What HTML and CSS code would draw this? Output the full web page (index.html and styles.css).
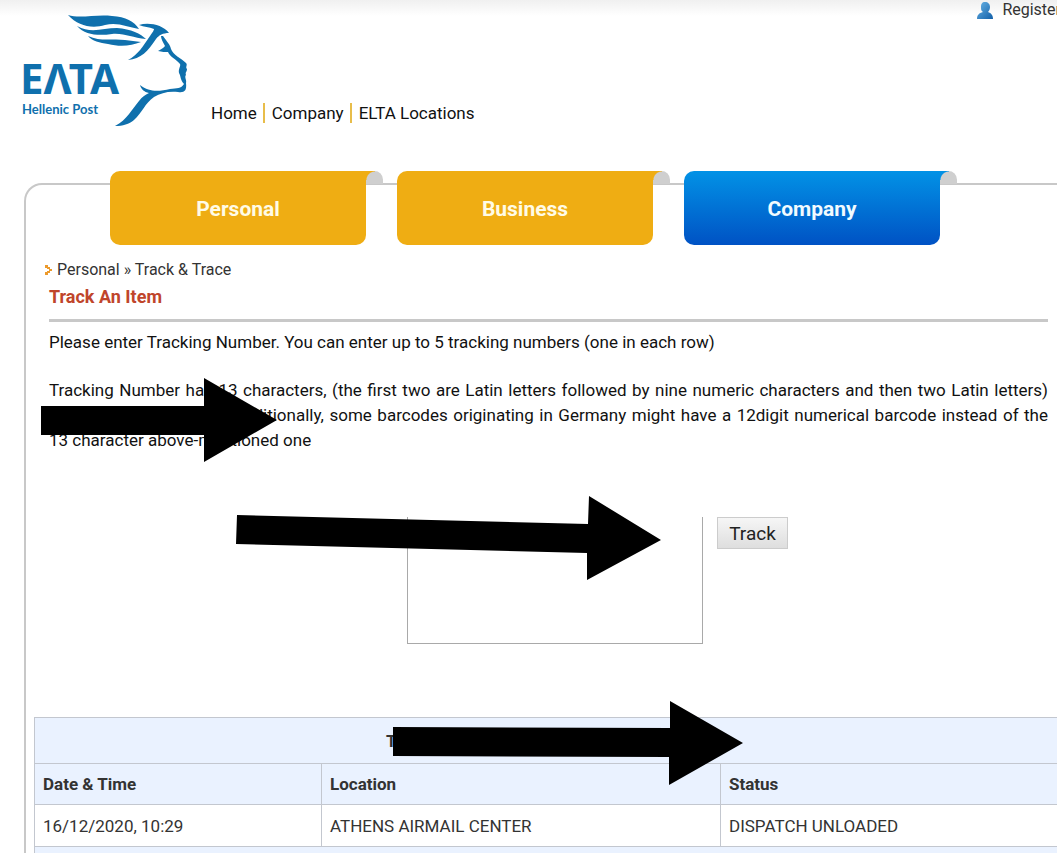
FILE: index.html
```html
<!DOCTYPE html>
<html lang="en">
<head>
    <meta charset="UTF-8">
    <meta name="viewport" content="width=device-width, initial-scale=1.0">
    <title>ELTA - Track &amp; Trace</title>
    <link rel="stylesheet" href="styles.css">
</head>
<body>
    <header>
        <a href="#" class="logo" aria-label="ELTA Hellenic Post">
            <svg width="190" height="132" viewBox="0 0 190 132">
                <g fill="#0f70ad">
                    <path d="M68 15 C80 19 96 14 112 16 C126 17 134 21 139 29 C127 27 118 22 105 25 C92 29 78 26 68 15 Z"/>
                    <path d="M77 26 C91 34 103 28 117 28 C131 29 141 34 146 39 C132 38 125 33 112 34 C98 36 85 35 77 26 Z"/>
                    <path d="M88 36 C101 42 113 38 125 40 L141 42 C131 46 120 47 108 44 C100 43 92 41 88 36 Z"/>
                    <path d="M139 25 C149 22 163 25 169 33 C163 33 159 35 156 39 C148 51 141 59 128 60 C138 55 143 46 150 36 C153 32 154 30 154 29 C149 27 144 27 139 25 Z"/>
                    <path d="M163 36 C167 42 170 44 171 49 C173 55 181 58 186 63 C188 65 185 67 187 69 C187 72 185 72 186 75 C184 77 187 80 186 83 C187 91 184 93 178 92 C168 91 161 93 154 97 C145 103 142 113 134 120 C129 124 123 126 115 126 C127 120 132 109 139 101 C142 97 145 95 149 93 C144 92 141 89 140 85 C150 93 160 91 170 89 C177 88 181 89 184 84 C180 80 181 76 179 73 C178 69 181 66 180 64 C176 59 170 57 168 52 C165 52 162 52 158 51 C161 49 164 48 165 46 C163 42 161 39 161 36 Z"/>
                </g>
                <text x="20" y="94" class="logo-name">ΕΛΤΑ</text>
                <text x="22" y="114" class="logo-sub">Hellenic Post</text>
            </svg>
        </a>
        <nav class="main-nav">
            <a href="#">Home</a>
            <a href="#">Company</a>
            <a href="#">ELTA Locations</a>
        </nav>
        <a href="#" class="register">
            <svg width="17" height="17" viewBox="0 0 17 17">
                <defs>
                    <linearGradient id="userBlue" x1="0" y1="0" x2="1" y2="1">
                        <stop offset="0" stop-color="#69b4e6"/>
                        <stop offset="1" stop-color="#125fa8"/>
                    </linearGradient>
                </defs>
                <path fill="url(#userBlue)" d="M8 0 C11 0 13 2 13 5 C13 7 12 9 11 10 C14 11 16 13 16 17 L0 17 C0 13 2 11 6 10 C4 9 4 7 4 5 C4 2 5 0 8 0 Z"/>
            </svg>
            Register
        </a>
    </header>

    <main class="panel">
        <div class="tabs">
            <a href="#" class="tab">Personal</a>
            <a href="#" class="tab">Business</a>
            <a href="#" class="tab active">Company</a>
        </div>

        <div class="content">
            <div class="breadcrumb">
                <svg width="8" height="10" viewBox="0 0 8 10" fill="#ec9a2c">
                    <path d="M0 0h3v2h2v2h2v2h-2v2h-2v2h-3v-3h2v-1h2v-2h-2v-1h-2z"/>
                </svg>
                <span><a href="#">Personal</a> » <a href="#">Track &amp; Trace</a></span>
            </div>
            <h1>Track An Item</h1>
            <p>Please enter Tracking Number. You can enter up to 5 tracking numbers (one in each row)</p>
            <p>Tracking Number has 13 characters, (the first two are Latin letters followed by nine numeric characters and then two Latin letters) (e.g. RR123456789GR). Additionally, some barcodes originating in Germany might have a 12digit numerical barcode instead of the 13 character above-mentioned one</p>

            <form class="track-form">
                <textarea aria-label="Tracking numbers"></textarea>
                <button type="button">Track</button>
            </form>
        </div>

        <table>
            <colgroup>
                <col class="col-date">
                <col class="col-location">
                <col>
            </colgroup>
            <thead>
                <tr class="title-row">
                    <th colspan="3">Tracking Number: RR123456789GR - Details</th>
                </tr>
                <tr>
                    <th>Date &amp; Time</th>
                    <th>Location</th>
                    <th>Status</th>
                </tr>
            </thead>
            <tbody>
                <tr>
                    <td>16/12/2020, 10:29</td>
                    <td>ATHENS AIRMAIL CENTER</td>
                    <td>DISPATCH UNLOADED</td>
                </tr>
                <tr>
                    <td colspan="3"></td>
                </tr>
            </tbody>
        </table>
    </main>

    <!-- Arrows drawn over the page -->
    <svg class="arrows" width="1057" height="853" viewBox="0 0 1057 853">
        <polygon points="41,406 204,406 204,378 277,420 204,462 204,435 41,435"/>
        <polygon points="237,515 588,524 589,496 661,540 587,580 587,553 236,544"/>
        <polygon points="393,727 670,728 670,701 743,743 669,785 669,757 393,756"/>
    </svg>
</body>
</html>
```
FILE: styles.css
```css
/* Global Styles */
* {
    box-sizing: border-box;
}
body {
    font-family: Roboto, "Liberation Sans", sans-serif;
    font-size: 17px;
    line-height: 26px;
    margin: 0;
    height: 100vh;
    position: relative;
    overflow: hidden;
    color: #111;
    background: #fff linear-gradient(#f0f0f0, #fff) no-repeat;
    background-size: 100% 16px;
}
a {
    color: inherit;
    text-decoration: none;
}

/* Header */
header {
    display: flex;
    align-items: flex-start;
    height: 183px;
}
.logo svg {
    display: block;
}
.logo-name {
    font: bold 42px "Noto Sans", sans-serif;
    fill: #0f70ad;
}
.logo-sub {
    font: bold 13px Lato, sans-serif;
    fill: #0f70ad;
}
.main-nav {
    display: flex;
    margin: 103px auto 0 21px;
    line-height: 20px;
}
.main-nav a + a {
    border-left: 2px solid #e8bd4a;
    margin-left: 6px;
    padding-left: 7px;
}
.register {
    display: flex;
    gap: 8px;
    align-items: center;
    font-size: 16px;
    line-height: 20px;
    margin-right: -4px;
    color: #333;
}

/* Panel and tabs */
.panel {
    margin-left: 24px;
    margin-right: -24px;
    border: 2px solid #c8c8c8;
    border-bottom: none;
    border-radius: 18px 0 0 0;
}
.tabs {
    display: flex;
    gap: 31px;
    margin: -14px 0 0 84px;
}
.tab {
    position: relative;
    width: 256px;
    height: 74px;
    line-height: 76px;
    border-radius: 10px 0 10px 10px;
    background: #efad13;
    color: #fffbe6;
    font-size: 21px;
    font-weight: bold;
    text-align: center;
}
/* folded corner behind the tab */
.tab::after {
    content: "";
    position: absolute;
    left: 100%;
    top: 0;
    width: 17px;
    height: 13px;
    border-radius: 9px 9px 0 0;
    background: #cfcfcf;
}
.tab::before {
    content: "";
    position: absolute;
    z-index: 1;
    left: 100%;
    top: 0;
    width: 9px;
    height: 9px;
    background: radial-gradient(circle at 100% 100%, transparent 8px, #efad13 9px);
}
.tab.active {
    background: linear-gradient(#0292e6, #0052c4);
    color: #f2fbff;
}
.tab.active::before {
    background: radial-gradient(circle at 100% 100%, transparent 8px, #0290e4 9px);
}

/* Content */
.content {
    padding: 12px 31px 0 23px;
}
.breadcrumb {
    display: flex;
    align-items: center;
    gap: 4px;
    margin-left: -4px;
    font-size: 16px;
    color: #333;
}
h1 {
    margin: 0 0 8px;
    padding-bottom: 8px;
    border-bottom: 3px solid #c8c8c8;
    font-size: 18px;
    line-height: 28px;
    color: #c0452b;
}
p {
    margin: 0 0 23px;
    line-height: 25px;
    text-align: justify;
}
.track-form {
    display: flex;
    justify-content: center;
    align-items: flex-start;
    gap: 14px;
    padding-left: 98px;
    margin: 64px 0 73px;
}
textarea {
    width: 296px;
    height: 127px;
    border: 1px solid #a9a9a9;
    border-top: none;
    background: #fff;
    resize: none;
}
button {
    height: 32px;
    padding: 0 11px;
    border: 1px solid #ccc;
    background: linear-gradient(#f6f6f6, #dedede);
    font-family: inherit;
    font-size: 19px;
    color: #222;
}

/* Results */
table {
    width: calc(100% - 8px);
    margin-left: 8px;
    border-collapse: collapse;
    table-layout: fixed;
    color: #333;
}
th, td {
    height: 41px;
    padding: 0 8px;
    border: 1px solid #c3c7cf;
    text-align: left;
}
td {
    height: 42px;
}
thead, tr:nth-child(even) td {
    background: #eaf2ff;
}
.title-row th {
    height: 46px;
    text-align: center;
}
.col-date {
    width: 287px;
}
.col-location {
    width: 399px;
}

.arrows {
    position: absolute;
    top: 0;
    left: 0;
}
```
